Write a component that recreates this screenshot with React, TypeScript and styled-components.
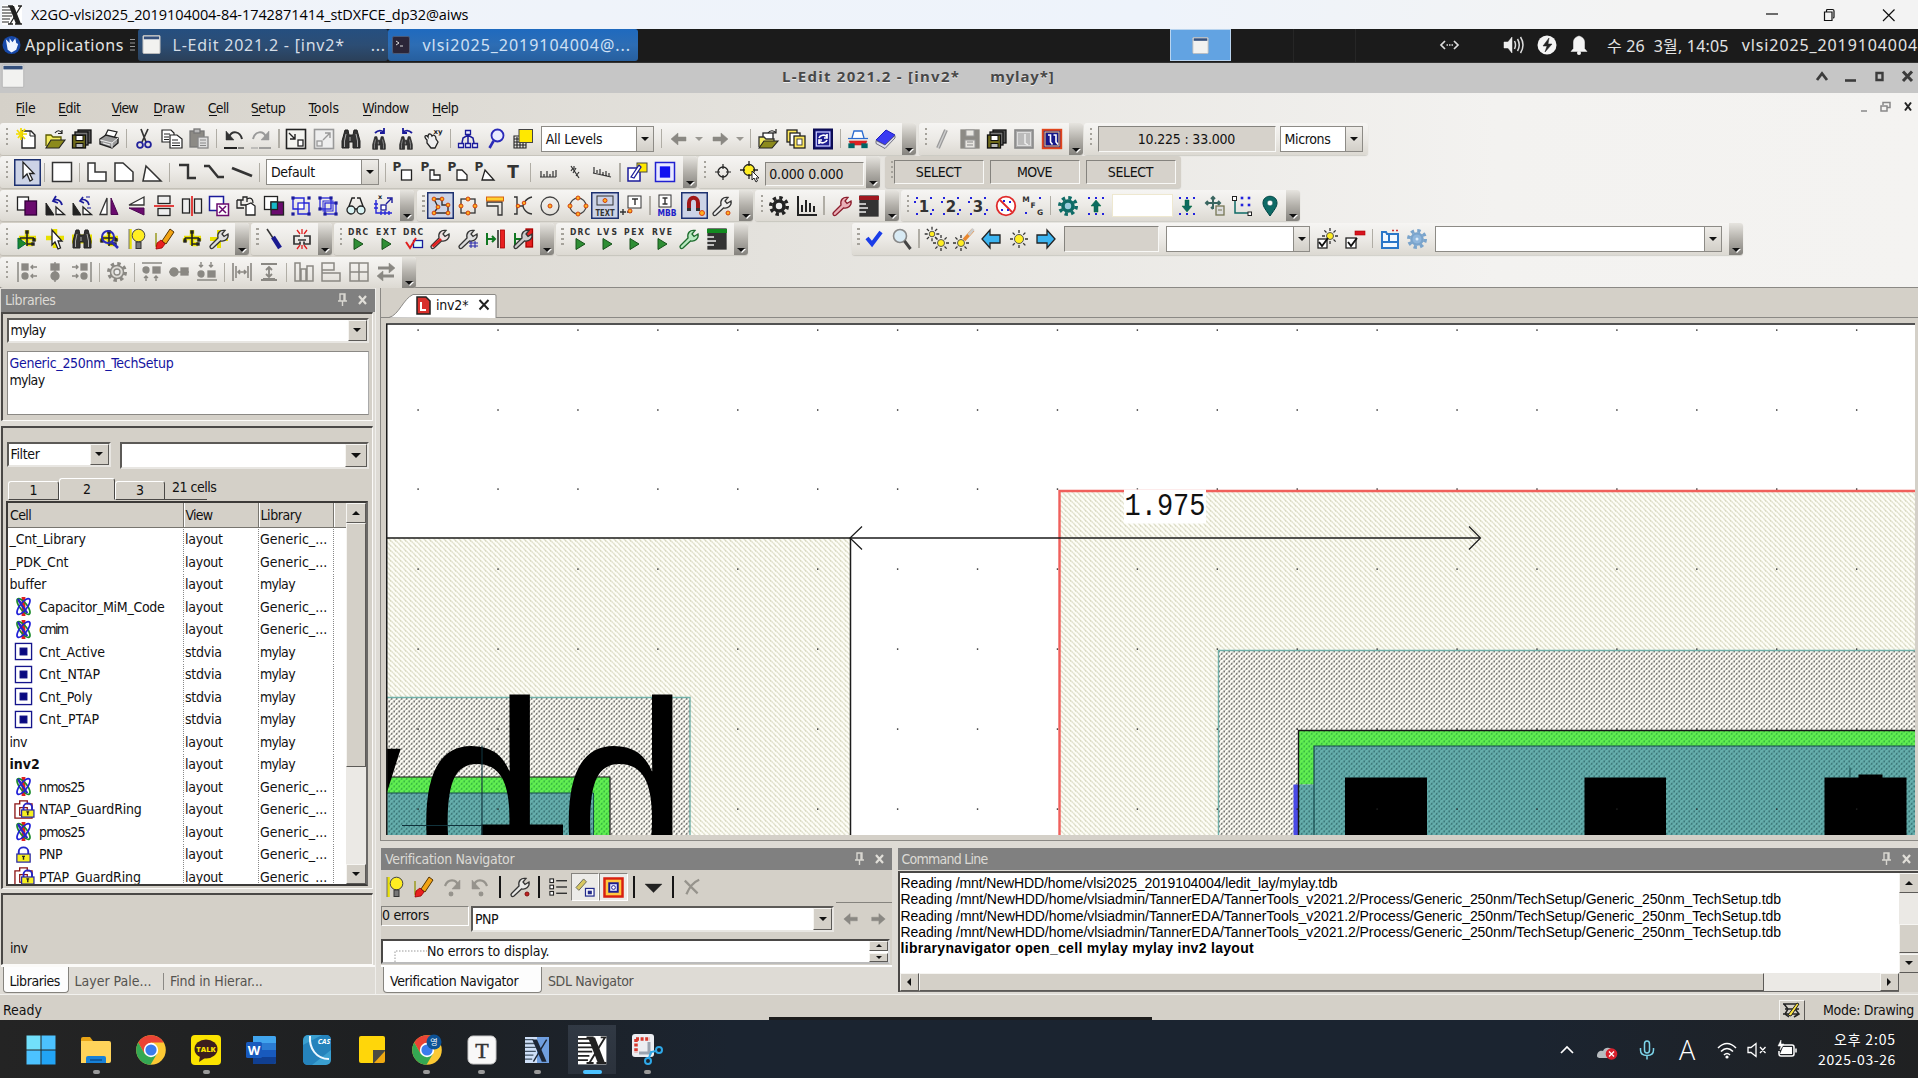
import React, { useLayoutEffect, useRef, useState } from "react";
import styled, { createGlobalStyle, css } from "styled-components";

const UI = `"DejaVu Sans Condensed", "DejaVu Sans", "Noto Sans CJK KR", sans-serif`;
const SYS = `"Open Sans", "Noto Sans CJK KR", sans-serif`;
const CONSOLE = `"Liberation Sans", Arial, sans-serif`;
const NAVY = "#1b1b9a";
const FACE = "#d4d0c8";

const Global = createGlobalStyle`
  * { box-sizing: border-box; }
  html, body { margin: 0; padding: 0; }
  body { width: 1918px; height: 1078px; overflow: hidden; font: 14px ${UI}; color: #111; background: ${FACE}; }
  svg { display: block; flex: none; }
`;

/* ---------- text that is tightened or loosened to a given width ---------- */

const FitSpan = styled.span`
  display: inline-block;
  white-space: pre;
  flex: none;
`;

function Fit({ w, children }: { w: number; children: string }) {
  const ref = useRef<HTMLSpanElement>(null);
  const [gap, setGap] = useState(0);
  useLayoutEffect(() => {
    if (ref.current) setGap((w - ref.current.offsetWidth) / children.length);
  }, []);
  return (
    <FitSpan ref={ref} style={{ letterSpacing: gap ? `${gap}px` : undefined }}>
      {children}
    </FitSpan>
  );
}

/* ---------------------------- icon drawings ---------------------------- */

const Svg = styled.svg`
  overflow: visible;
`;

const P = (d: string, s = "#222", w = 1.4, f = "none") => <path d={d} stroke={s} strokeWidth={w} fill={f} />;
const R = (x: number, y: number, w: number, h: number, f = "#fff", s = "#222", sw = 1.3) => (
  <rect x={x} y={y} width={w} height={h} fill={f} stroke={s} strokeWidth={sw} />
);
const C = (x: number, y: number, r: number, f = "none", s = "#222", sw = 1.3) => (
  <circle cx={x} cy={y} r={r} fill={f} stroke={s} strokeWidth={sw} />
);
const T = (x: number, y: number, size: number, t: string, f = "#222", w = 700) => (
  <text x={x} y={y} fontSize={size} fontWeight={w} fill={f} textAnchor="middle" fontFamily="DejaVu Sans">
    {t}
  </text>
);
const corners = (pts: number[][], f: string, s: string, r = 2) => pts.map(([x, y], i) => <g key={i}>{C(x, y, r, f, s, 1)}</g>);
const dots = (pts: number[][], f = "#2222dd", r = 1) =>
  pts.map(([x, y], i) => <rect key={i} x={x - r} y={y - r} width={2 * r} height={2 * r} fill={f} />);

const wrench = (f = "#eee", s = "#333") =>
  P("M1.500 16.500L9 9C8 4 11 .5 16 1.500L13 5l2 2.500L19 5c1 4.500-3 8-7.500 7L4 19c-2 1.500-4-.5-2.500-2.500z", s, 1.3, f);
const play = (x = 10, y = 14.5) => P(`M${x - 4} ${y - 5}v11l9-5.500z`, "#17521b", 1, "#2f8e35");
const tag = (t: string) => (
  <text x="10" y="5.500" fontSize="8.500" fontWeight="700" fill="#333" textAnchor="middle" textLength="20" fontFamily="DejaVu Sans Condensed, DejaVu Sans">
    {t}
  </text>
);
const binoc = (c = "#333") => (
  <>
    {P("M4 1h3l1 5h4l1-5h3l3 11v7h-7v-6H8v6H1v-7z", "#222", 1, c)}
    {P("M5 5L3.500 12v6M15 5l1.500 7v6M9 8v4", "#aaa", 1)}
  </>
);
const disks = (
  <>
    {R(6, 1, 13, 13, "#555", "#111")}
    {R(3, 3, 13, 13, "#777", "#111")}
    {R(0.5, 6, 13, 13, "#6f6a1c", "#111")}
    {R(4, 6.5, 7, 5, "#fff", "#111", 1)}
    {R(4, 14.5, 7, 4, "#bbb", "#111", 1)}
  </>
);
const tri = (
  <>
    {P("M1 19V7l8 12z", "#222", 1, "#222")}
    {P("M11 18.500h8.500L11 11z", "#222", 1.3, "#fff")}
  </>
);
const sun = (x: number, y: number, r: number) => (
  <>
    {P(
      [0, 45, 90, 135, 180, 225, 270, 315]
        .map((a) => {
          const c = Math.cos((a * Math.PI) / 180);
          const s = Math.sin((a * Math.PI) / 180);
          return `M${x + c * (r + 1.5)} ${y + s * (r + 1.5)}L${x + c * (r + 4.5)} ${y + s * (r + 4.5)}`;
        })
        .join(""),
      "#333",
      1.3
    )}
    {C(x, y, r, "#ffee22", "#555", 1)}
  </>
);
const gear = (f: string, hole: string, cx = 10, cy = 10, k = 1) => (
  <g transform={`translate(${cx} ${cy}) scale(${k})`}>
    <circle r="8.2" fill="none" stroke={f} strokeWidth="3.6" strokeDasharray="3.3 3.14" />
    <circle r="5" fill={hole} stroke={f} strokeWidth="3.6" />
  </g>
);
const hier = (s: string, f: string) => (
  <>
    {P("M10 1v15M2 9h17M3 9v4M17 9v3M10 15h6", "#e8e000", 4.500)}
    {P("M10 3v14M3 9h14M3 9v3M17 9v3M10 15h6", s, 1.6)}
    {dots([[10, 3], [3, 12], [17, 11], [16, 15]], s, 1.7)}
    {f && P("M1 9v11l8-5.500z", "#064", 1, f)}
  </>
);
const grid9 = dots([[3, 2], [10, 2], [17, 2], [3, 18], [10, 18], [17, 18]]);
const snapDots = dots([[3, 2], [17, 2], [3, 18], [17, 18], [1, 6], [19, 14]]);
const aluminum = "#8a8883";

const ICONS: Record<string, React.ReactNode> = {
  new: (<>{P("M5 2h9l4 4v13H5z", "#222", 1.4, "#fff")}{P("M13 2v5h5", "#222", 1)}{P("M0 1l8 9M8 0L1 9M4 -1v12M-1 5h11", "#f2dc00", 1.7)}</>),
  open: (<>{P("M1 17V6h5l2 2h8v3", "#5a5a00", 1.3, "#f4ec60")}{P("M1 19l5-8h14l-6 8z", "#222", 1.1, "#8c8a1c")}{P("M10 4c2-3 5-3 7 0M17 1v3.500h-4", "#222", 1.2)}</>),
  disks,
  print: (<>{P("M6 7l3-6 9 2-3 6", "#222", 1.2, "#fff")}{P("M1 10l6-4 12 3v5l-6 5L1 15z", "#222", 1.4, "#999")}{P("M1 11l12 3 6-5M13 14v5M4 14l7 2", "#eee", 1)}</>),
  cut: (<>{P("M7 0l5 13M14 0L8 13", "#333", 1.7)}{C(6, 16, 2.9, "none", "#22229a", 1.8)}{C(14, 15.5, 2.9, "none", "#22229a", 1.8)}</>),
  copy: (<>{P("M0 1h9l3 3v9H0z", "#222", 1.2, "#fff")}{P("M2 5h6M2 8h5M2 10.500h5", "#222", 1)}{P("M8 6h7l5 4v9H8z", "#222", 1.2, "#fff")}{P("M10 11h6M10 14h8M10 16.500h8", "#222", 1)}</>),
  paste: (<>{R(1, 2, 14, 16, "#8c8a85", "#777")}{R(5, 0, 6, 4, "#bbb", "#777")}{R(9, 8, 10, 11, "#ddd", "#888")}{P("M11 11h6M11 14h6M11 16.500h6", "#888", 1)}</>),
  undo: (<>{P("M5 8c3-7 11-6 13 2", "#333", 2)}{P("M2 2v9h8z", "#333", 0.5, "#333")}{P("M0 19h13", "#222", 2)}{P("M14 19h6", "#222", 1)}</>),
  redo: (<>{P("M15 8C12 1 4 2 2 10", "#999", 2)}{P("M18 2v9h-8z", "#999", 0.5, "#999")}{P("M8 19h12", "#888", 1.500)}{P("M0 19h7", "#999", 1)}</>),
  zoomin: (<>{R(0.500, 0.500, 19, 19, "#f4f4f0", "#222", 1.6)}{R(12, 11, 5, 6, "#fff")}{P("M3 4l6 6M9 5v5H4")}</>),
  zoomout: (<>{R(0.500, 0.500, 19, 19, "#eee", "#999", 1.6)}{R(3, 12, 5, 5, "#eee", "#999")}{P("M9 11l7-7M11 4h5v5", "#999")}</>),
  find: binoc(),
  findnext: (<><g transform="translate(3 7) scale(.7)">{binoc()}</g>{P("M6 4c3-3 6-3 9-1M15 -1v5h-4", NAVY, 1.8)}</>),
  findprev: (<><g transform="translate(3 7) scale(.7)">{binoc()}</g>{P("M16 4c-3-3-6-3-9-1M7 -1v5h4", NAVY, 1.8)}</>),
  hand: (<>{P("M4 11c-4-4-1-6 1-3 0-4 3-4 4-1 2-2 4 0 4 3l2 3-3 6H8l-4-5z", "#222", 1.3, "#eee")}{T(15, 5, 7, "xy")}</>),
  tree: (<>{P("M10 5v9M4 14l1-5 5-3 5 3 1 5", NAVY, 1.5)}{[[8, 0], [1, 13], [8, 13], [15, 13]].map(([x, y], i) => <g key={i}>{P(`M${x - 0.5} ${y + 5.500}v-4h5v4z`, NAVY, 1.3, "#eef")}</g>)}</>),
  mag: (<>{C(11.500, 6.500, 6, "#e9ecff", "#2a2ab8", 1.8)}{P("M7.500 12l-4 7", "#2a2ab8", 2.6)}</>),
  layers: (<>{P("M1 7h12v12H1zM1 10h12M1 13h12M1 16h12M4 8v11M7 8v11M10 8v11", "#222", 1.1)}{R(6, 0.500, 13.500, 13, "#ffe800", "#444", 1)}</>),
  left: P("M2 10l7-6v4h8v4H9v4z", aluminum, 0.5, aluminum),
  right: P("M18 10l-7-6v4H3v4h8v4z", aluminum, 0.5, aluminum),
  openlib: (<>{R(5, 4, 10, 7, "#fff")}{P("M1 18V8h5l2 2h8v3", "#333", 1.3, "#f4ec60")}{P("M1 19l5-7h14l-6 7z", "#222", 1.1, "#8c8a1c")}{P("M10 4c2-3 6-3 8 0M18 0v4h-3", "#222", 1.2)}</>),
  copies: (<>{R(1, 1, 10, 12, "#ffe95a")}{R(4, 4, 10, 12, "#fff")}{R(8, 7, 11, 12, "#ffe95a")}{R(11, 10, 5, 6, "#fff", "#444", 1)}</>),
  sync: (<>{R(1, 0.500, 18, 19, "#1e1e90", "#0c0c55", 2)}{R(3.300, 3, 13.500, 14, "none", "#cfd2ff", 1.200)}{P("M6 9c1-3 6-4 8-1M14 11c-1 3-6 4-8 1M14 5v4h-3M6 15v-4h3", "#fff", 1.7)}</>),
  car: (<>{P("M4 9l2-7h8l2 7", "#2a6bd0", 1.3, "#fff")}{P("M0 9.500h20", "#2a6bd0", 1.200)}{P("M1 12h18l-2 4H3z", "#c22", 0.6, "#d22")}{R(1, 15, 5, 3.500, "#066", "#066")}{R(14, 15, 5, 3.500, "#066", "#066")}</>),
  book: (<>{P("M1 11L11 1l9 5-10 10z", "#1a1ac0", 1, "#3a3af2")}{P("M1 11.500v3l9 5L20 9V6.500L10 16z", "#556", 0.8, "#dde")}</>),
  pencil: (<>{P("M14 1L6 19", "#999", 4)}{P("M14 1L6 19", "#ccc", 1.5)}</>),
  save: (<>{R(1, 1, 18, 18, "#8c8a85", "#8c8a85")}{R(6, 1, 8, 6, "#e8e6e1", "#999", 1)}{R(5, 11, 10, 8, "#e8e6e1", "#999", 1)}{P("M7 13h6M7 16h6", "#888", 1)}</>),
  chipgray: (<>{R(1, 1, 18, 18, "#aaa", "#888", 1.6)}{R(3.5, 3.5, 13, 13, "#bbb", "#ddd", 1)}{P("M11 5v9l3 2", "#eee", 1.5)}</>),
  chipblue: (<>{R(0.800, 0.800, 18.400, 18.400, "#16168a", "#e0451c", 2)}{R(3, 3, 14, 14, "#16168a", "#ffd080", 1)}{P("M6 6h2.500v7l2 2.500M11.500 6H14v7l2 2.500", "#fff", 1.6)}</>),

  select: P("M6 0v16l4-4 3 7 2.500-1.500-3-6H17z", "#222", 1.3, "#fff"),
  rect: R(0.5, 0.5, 19, 19, "#fff", "#333", 1.5),
  poly: P("M1 1h7v9h11v9H1z", "#333", 1.5, "#fff"),
  poly45: P("M1 1h8l10 9v9H1z", "#333", 1.5, "#fff"),
  polyany: P("M4 4l15 15H1z", "#333", 1.5, "#fff"),
  wire90: P("M2 3h9v13h8", "#333", 2.4),
  wire45: P("M0 4h5l9 11h6", "#333", 2.4),
  wireany: P("M0 6l20 8", "#333", 2.8),
  prect: (<>{T(4, 9, 12, "P", "#333")}{R(8.500, 8, 10, 10)}</>),
  ppoly: (<>{T(4, 9, 12, "P", "#333")}{P("M9 8h4v5h6v5H9z", "#222", 1.3, "#fff")}</>),
  ppoly45: (<>{T(4, 9, 12, "P", "#333")}{P("M9 8h5l5 5v5H9z", "#222", 1.3, "#fff")}</>),
  pany: (<>{T(4, 9, 12, "P", "#333")}{P("M10 8l9 10H7z", "#222", 1.3, "#fff")}</>),
  text: T(10, 16, 17, "T", "#333"),
  ruler: P("M2 15h16M3 15V9M6 15v-3M9 15V9M12 15v-3M15 15V9M18 15V8", "#333", 1.2),
  ruler45: P("M6 4l8 12M6 9l2-3M8 11l3-5M11 14l3-4M9 4v3", "#333", 1.2),
  rulerany: P("M1 11l18 4M2 11V5M5 11V8M8 12V7M11 13v-3M14 14V9M17 14v-3", "#333", 1.2),
  editin: (<>{R(1, 6, 12, 13, "#fff", NAVY, 1.5)}{R(10, 1, 10, 9, "#ffe800", "#444", 1)}{P("M4 15l8-12 2 2-7 11z", NAVY, 1.3, "#fff")}</>),
  via: (<>{R(0.5, 0.5, 19, 19, "#e8e8ff", "#2020d0", 1.5)}{R(5.5, 5, 9, 10, "#1010f0", "#1010f0")}</>),

  target: (<>{C(10, 10, 5)}{P("M10 2v5M10 13v5M2 10h5M13 10h5", "#222", 1.2)}</>),
  targetsel: (<>{C(9, 8, 5.500, "#ffee22")}{P("M9 -1v5M9 12v5M0 8h5M13 8h5", "#222", 1.3)}{P("M12 9v9l2-2 2 4 1.500-1-1.500-3h3z", "#222", 1, "#fff")}</>),

  dup: (<>{R(0.500, 1, 11, 13, "#fff")}{R(8, 5, 11.500, 14, "#6a0a6e", "#33003a")}</>),
  rot90: (<>{tri}{P("M8 5c3-3 8-1 9 4M11 0L8 5l5 2", NAVY, 1.8)}</>),
  rotany: (<>{tri}{P("M8 5c3-3 8-1 9 4M11 1L8 5l4 2", NAVY, 1.600)}{P("M14 1h4M15 12h4", NAVY, 1)}</>),
  fliph: (<>{P("M1 18.500L8 2v16.500z", "#333", 1.3, "#fff")}{P("M12 18.500V2l7 16.500z", "#4a0850", 1, "#6a0a6e")}</>),
  flipv: (<>{P("M2 9L17 1v8z", "#333", 1.3, "#fff")}{P("M2 12h15v7z", "#4a0850", 1, "#6a0a6e")}</>),
  sliceh: (<>{R(4, 0, 12, 7.500, "#eee")}{R(4, 12.500, 12, 7, "#eee")}{P("M0 10h20", "#e02020", 1.7)}</>),
  slicev: (<>{R(0.500, 3, 7, 14, "#eee")}{R(12.500, 3, 7, 14, "#eee")}{P("M10 0v20", "#e02020", 1.7)}</>),
  nibble: (<>{R(0.500, 0.500, 14, 14, "#fff", NAVY, 1.5)}{R(8, 8, 11.500, 11.500, "#fff", "#6a0a6e", 1.5)}{P("M10 10l7 7M17 10l-7 7", "#6a0a6e", 1.5)}</>),
  merge: (<>{P("M1 4h6V1h4v5M1 4v8h7M5 4v5h7", "#222", 1.3)}{P("M10 9l5-2 4 3v9h-9z", "#222", 1.3, "#fff")}{P("M11 3c4-2 6 0 6 4", "#222", 1.2)}</>),
  boolean: (<>{R(0.500, 0.500, 13, 13, "#fff")}{R(7, 6, 12.500, 13, "#6a0a6e")}{R(7, 6, 6.500, 7.500, "#18b8c8")}</>),
  group: (<>{P("M2 2h11v5h5v11H7v-5H2z", "#2626d8", 1.4)}{R(7, 7, 6, 6, "#fff", "#2626d8")}{dots([[2, 2], [18, 2], [2, 18], [18, 18]], NAVY, 1.6)}</>),
  ungroup: (<>{R(2, 2, 11, 11, "none", "#2626d8")}{R(7, 7, 11, 11, "none", "#2626d8")}{R(5, 5, 10, 10, "none", "#2626d8", 1)}{dots([[2, 2], [13, 2], [2, 13], [18, 18], [18, 7], [7, 18]], NAVY, 1.6)}</>),
  glasses: (<>{P("M2 13L6 2h3M18 13L14 2h-3M9 13h2", "#222", 1.4)}{C(5, 14, 4, "#d8f2f2")}{C(15, 14, 4, "#d8f2f2")}</>),
  axes: (<>{P("M3 4v13h16M1 8h4M1 12h4M8 19v-4M12 19v-4M16 19v-4", "#2626d8", 1.400)}{R(8, 9, 5, 5, "#fff", NAVY)}{P("M13 8l5-5M14 2h5v5", NAVY, 1.4)}{T(7, 3, 6.500, "x")}</>),

  snapvertex: (<>{P("M3 3h8v6h6v8H3l4-6z", "#333")}{corners([[3, 3], [11, 3], [7, 11], [17, 9], [17, 17], [3, 17]], "#ffb020", "#d04010", 1.900)}</>),
  snapmid: (<>{R(3, 3, 14, 14, "none", "#333")}{corners([[10, 3], [3, 10], [17, 10], [10, 17]], "#ffb020", "#d04010")}</>),
  snapedge: (<>{P("M2 6h15v13h-4v-9H2z", "#333", 1.3)}{P("M1 3h18", "#d86010", 5)}{P("M2 3h16", "#ffd030", 3)}</>),
  snapcross: (<>{P("M1 1h3v17H1M19 1c-8 2-9 9-9 9s1 7 9 8M4 10h6", "#333")}{corners([[5, 10], [11, 7]], "#ffb020", "#d04010", 1.8)}</>),
  snapcenter: (<>{C(10, 10, 9, "none", "#444")}{corners([[10, 10]], "#ffb020", "#d04010")}</>),
  snapquad: (<>{C(10, 10, 8, "none", "#444")}{corners([[10, 2], [10, 18], [2, 10], [18, 10]], "#ffb020", "#d04010")}</>),
  snaptext: (<>{R(2, 0, 16, 9, "none", "#333", 1)}{corners([[10, 4.5]], "#ffb020", "#d04010")}<text x="10" y="19.500" fontSize="8.500" fontWeight="700" fill="#333" textAnchor="middle" textLength="19" lengthAdjust="spacingAndGlyphs" fontFamily="DejaVu Sans">TEXT</text></>),
  snapinst: (<>{R(6, 0, 13, 12, "#fff", "#333", 1)}{P("M10 3h6M13 3v6M1 13v6M-2 16h6M5 16h5", "#333")}{corners([[8, 15]], "#ffb020", "#d04010")}</>),
  mbb: (<>{R(2, -1, 12, 12, "#fff", "#333", 1)}{P("M5.500 2h5M8 2v6M5.500 8h5", "#333")}<text x="10" y="20" fontSize="9" fontWeight="700" fill="#2222c8" textAnchor="middle" textLength="19" lengthAdjust="spacingAndGlyphs" fontFamily="DejaVu Sans">MBB</text></>),
  magnet: (<>{P("M4 13V7c0-7 9-7 9 0v6", "#a01818", 4)}{P("M2 13.500h4M11 13.500h4", "#333", 3)}{corners([[17, 17]], "#ffb020", "#e04010", 2.5)}</>),
  snapset: (<>{wrench()}{corners([[16, 17]], "#ffb020", "#d04010", 2)}</>),

  gear: gear("#222", "#eee"),
  chart: P("M1 0v19h19M5 16V9M9 16V4M13 16V7M17 16v-6", "#222", 2),
  wrenchred: wrench("#eab0b8", "#8c1c2c"),
  listred: (<>{R(1, 0, 18, 20, "#333", "#333")}{P("M0 2h20", "#a01820", 4)}{P("M0 8h7M0 12h9M0 16h7", "#eee", 1.5)}</>),
  one: (<>{snapDots}{T(10, 16, 15, "1", "#333")}</>),
  two: (<>{snapDots}{T(10, 16, 15, "2", "#333")}</>),
  three: (<>{snapDots}{T(10, 16, 15, "3", "#333")}</>),
  none: (<>{C(10, 10, 9.300, "#fff", "#e02a2a", 1.8)}{P("M4 4l12 12", "#e02a2a", 1.8)}{dots([[8, 5], [14, 6], [6, 14], [12, 14]])}</>),
  mfg: (<>{T(3, 6, 7.5, "M", "#333")}{T(10, 12, 7.5, "F", "#333")}{T(17, 19, 7.5, "G", "#333")}{dots([[17, 2], [3, 17]])}</>),
  gearteal: gear("#0e6b66", "#9cd"),
  up: (<>{grid9}{P("M10 4l5 6h-3v6H8v-6H5z", "#063", 0.5, "#0c6b60")}</>),
  down: (<>{grid9}{P("M10 16l5-6h-3V4H8v6H5z", "#063", 0.5, "#0c6b60")}</>),
  movesave: (<>{P("M8 1v12M1 7h14M6 3l2-2 2 2M3 5L1 7l2 2M13 5l2 2-2 2M6 11l2 2", "#3a6660", 2)}{R(11, 10, 8, 9, "#ddd", "#775")}{P("M13 14h4", "#775", 1)}</>),
  origin: (<>{P("M3 3v14h14", "#0e6b66", 1.5)}{R(0.5, 0.5, 4, 4, "#fff", "#222", 1)}{R(16, 16, 3.5, 3.5, "#fff", "#222", 1)}{dots([[10, 2], [17, 2], [10, 9], [17, 9]], "#2222dd", 1.3)}</>),
  pin: (<>{P("M10 20C6 14 3 11 3 7c0-9 14-9 14 0 0 4-3 7-7 13z", "#044", 1, "#0e6b66")}{C(10, 7, 2.8, "#fff", "#044", 0.5)}</>),

  hiergreen: hier("#222", "#1c8a2c"),
  hiersel: (<>{P("M10 0v19M1 9h18", "#e8e000", 4.500)}{P("M7 1v15l3-3 3 7 2.500-1-2.500-7h4z", "#222", 1.3, "#fff")}</>),
  hierfind: (<>{P("M0 10h20", "#e8e000", 9)}{binoc()}</>),
  hierzoom: (<>{hier("#222", "")}{C(9, 8, 6, "none", "#2a2ab8", 2)}{P("M13 13l6 6", "#2a2ab8", 2.5)}</>),
  bulb: (<>{P("M3.500 0v20", "#e8e000", 2.500)}{P("M2 0v20", "#555", 0.800)}{C(11.500, 6.500, 6.300, "#ffee22", "#444", 1)}{R(9, 13, 5, 6.500, "#777", "#333", 1)}</>),
  brush: (<>{P("M2 4v13h4", "#9a9a20", 1.5)}{P("M8 12l8-12 4 3-8 12z", "#553300", 1, "#f2a414")}{P("M7 11l4 4-3 4-6 1 1-6z", "#900", 0.8, "#e82020")}</>),
  hierplain: hier("#222", ""),
  hierset: (<>{P("M1 10h18M10 1v18", "#e8e000", 4)}{wrench("#ddd")}</>),
  probe: (<>{P("M3 0l6 9", "#333", 1.5)}{P("M9 8l7 11", "#1a1a90", 4.5)}</>),
  unlink: (<>{P("M8 7H2v8h6v-2.500M12 7h6v8h-6v-2.500M6 11h8", "#333", 1.7)}{P("M10 0v5M5 1l3 4M15 1l-3 4M10 20v-4M5 20l3-4M15 20l-3-4", "#e02020", 1.3)}</>),
  drcrun: (<>{tag("DRC")}{play()}</>),
  extrun: (<>{tag("EXT")}{play()}</>),
  lvsrun: (<>{tag("LVS")}{play()}</>),
  pexrun: (<>{tag("PEX")}{play()}</>),
  rverun: (<>{tag("RVE")}{play()}</>),
  drcbox: (<>{tag("DRC")}{R(10.500, 11.500, 9, 7, "#dff", NAVY)}{P("M3 13l4 6 6-10", "#e02020", 2)}</>),
  drcset: (<>{wrench("#f0e0e0", "#333")}{P("M2.500 17.500L11 10", "#e02020", 3)}</>),
  gridset: (<>{wrench("#ddd")}{P("M11 14h9M11 17h9M13 12v7M17 12v7", "#2222a8", 1)}</>),
  dist: (<>{P("M2 4v12M2 10h8M7 7l3 3-3 3", "#117722", 2)}{P("M13 1v18", "#222", 1.5)}{R(15.500, 1, 4, 18, "#e82020", "#a00", 0.800)}</>),
  distset: (<>{R(13, 0, 6.500, 18, "#e82020", "#a00")}{P("M2 4v12M2 10h7", "#117722", 2)}{wrench("#ccc")}</>),
  wrenchgreen: wrench("#b8e8c0", "#1c6b2c"),
  listgreen: (<>{R(1, 0, 18, 20, "#333", "#333")}{P("M0 2h20", "#128a20", 4)}{P("M0 8h7M0 12h9M0 16h7", "#eee", 1.5)}</>),
  check: P("M3 9l5 6 9-12", "#1a3ce8", 4),
  magclear: (<>{C(8, 7, 6.500, "#d8eaf4", "#888", 1.6)}{P("M12.500 12l6 8", "#444", 3)}</>),
  suns: (<>{sun(5, 5, 2.800)}{sun(14, 14, 3.5)}</>),
  sunbrush: (<>{sun(7, 14, 3.5)}{P("M10 11l9-10", "#e88830", 3.5)}{P("M14.500 6l5-6", "#ccc", 3)}</>),
  bleft: P("M1 10l8-9v5h10v8H9v5z", "#222", 1.3, "#3cb4f0"),
  sun: sun(10, 10, 4.500),
  bright: P("M19 10l-8-9v5H1v8h10v5z", "#222", 1.3, "#3cb4f0"),
  chksun: (<>{sun(13, 7, 3.5)}{R(1, 10, 9, 9, "#fff")}{P("M2 13l3 4 6-8", "#111", 1.9)}</>),
  chkminus: (<>{R(10, 2, 10, 4, "#d81420", "#a00", 0.6)}{R(1, 9, 10, 10, "#fff")}{P("M3 13l3 4 6-8", "#111", 1.9)}</>),
  panes: (<>{P("M2 3h4l1 2h11v14H2zM2 13h16M9 5v8", "#2a76c8", 2, "#f2f8ff")}{P("M12 1.500h2M16 1.500h2", "#c33", 1.5)}</>),
  gearblue: (<>{gear("#7aa4cc", "#a8c8e6")}{C(10, 10, 5, "#8fb6dc", "#7aa4cc", 1)}{C(10, 10, 1.500, "#dcebf8", "#dcebf8", 0)}</>),

  alleft: (<>{P("M1 0v20", aluminum, 1.5)}{R(5, 2, 6, 6, aluminum, aluminum)}{C(8, 14, 3, aluminum, aluminum)}{P("M20 5h-6M16 3l-2 2 2 2M20 14h-6M16 12l-2 2 2 2", aluminum)}</>),
  alcenter: (<>{R(6, 2, 8, 6, aluminum, aluminum)}{C(10, 14, 4, aluminum, aluminum)}{P("M10 0v20", aluminum)}</>),
  alright: (<>{P("M19 0v20", aluminum, 1.5)}{R(9, 2, 6, 6, aluminum, aluminum)}{C(12, 14, 3, aluminum, aluminum)}{P("M0 5h6M4 3l2 2-2 2M0 14h6M4 12l2 2-2 2", aluminum)}</>),
  geargray: (<>{gear(aluminum, "#ddd")}{C(10, 10, 6.500, "#dddbd6", aluminum, 1.500)}{C(10, 10, 3, "#eee", aluminum, 1.300)}</>),
  altop: (<>{P("M0 1h20", aluminum, 1.5)}{C(4, 8, 3, aluminum, aluminum)}{R(11, 5, 7, 6, aluminum, aluminum)}{P("M4 19v-5M2 16l2-2 2 2M14 19v-5M12 16l2-2 2 2", aluminum)}</>),
  almid: (<>{C(5, 10, 4, aluminum, aluminum)}{R(12, 6, 7, 7, aluminum, aluminum)}{P("M0 10h20", aluminum)}</>),
  albottom: (<>{P("M0 18h20", aluminum, 1.5)}{C(4, 12, 3, aluminum, aluminum)}{R(11, 9, 7, 6, aluminum, aluminum)}{P("M4 0v5M2 3l2 2 2-2M14 0v5M12 3l2 2 2-2", aluminum)}</>),
  sph: P("M1 1v18M4 4v12M16 4v12M19 1v18M6 10h8M8 8l-2 2 2 2M12 8l2 2-2 2", aluminum, 1.6),
  spv: P("M2 2h16M2 18h16M4 17h12M10 5v10M7 8l3-3 3 3M7 12l3 3 3-3", aluminum, 1.8),
  tiletop: P("M1 1h5v18H1zM7 7h5v12H7zM13 4h6v15h-6z", aluminum, 1.5),
  tileleft: P("M1 1h12v7H1zM1 11h18v8H1zM1 8v3", aluminum, 1.5),
  tile: P("M1 1h18v18H1zM10 1v18M1 10h18", aluminum, 1.5),
  swap: (<>{P("M2 6h12M18 14H6", aluminum, 3)}{P("M13 1l6 5-6 5zM7 9l-6 5 6 5z", aluminum, 0.5, aluminum)}</>),

  cellP: (<>{P("M10 0v20", "#e02020", 4)}<ellipse cx="10" cy="10" rx="3.800" ry="10" transform="rotate(-38 10 10)" fill="none" stroke="#1a8a2a" strokeWidth="1.800" /><ellipse cx="10" cy="10" rx="3.800" ry="10" transform="rotate(38 10 10)" fill="none" stroke="#2020d8" strokeWidth="1.800" />{P("M5 4l9 13M4 2l3 4", "#2626c8", 2.200)}</>),
  cellV: (<>{R(1.5, 1.5, 17, 17, "#fff", "#15158c", 1.4)}{R(6.5, 6.5, 7, 7, "#0a0a80", "#0a0a80")}</>),
  cellG: (<>{P("M6 4V1h8v3h5v15H1V4z", "#8c1414", 1.4, "#fff")}{R(6, 8, 8, 8, "#fff", "#8c1414", 1.3)}{P("M10 11V8c0-6 9-6 9 0v3", "#2626c8", 2)}{R(8, 10.5, 13, 7.500, "#f6f020", "#2626a8", 1.3)}{P("M14.500 12v4M13 12.500h3", "#222", 1.500)}</>),
  cellL: (<>{P("M5 10V7c0-6 10-6 10 0v3", "#2626c8", 2)}{R(3, 9.5, 14, 8.5, "#f6f020", "#2626a8", 1.3)}{P("M10 11.500v4M8.500 12h3", "#222", 1.500)}</>),
  gundo: (<>{P("M3 9c3-8 12-7 13 0", "#96938c", 2.2)}{P("M18 3v9h-8z", "#96938c", 0.5, "#96938c")}{C(9, 17, 1.8, "#96938c", "#96938c")}</>),
  gredo: (<>{P("M17 9c-3-8-12-7-13 0", "#96938c", 2.2)}{P("M2 3v9h8z", "#96938c", 0.5, "#96938c")}{C(11, 17, 1.8, "#96938c", "#96938c")}</>),
  verifset: (<>{wrench("#e8e8e6")}{C(17, 17, 2, "#c02020", "#801010", 1)}</>),
  list: (<>{[1, 8, 15].map((y) => <g key={y}>{R(1, y, 4, 4, "#fff", "#222", 1.2)}{P(`M8 ${y + 2}h12`, "#333", 1.6)}</g>)}</>),
  ruleview: (<>{P("M0 10L8 1l3 3-8 9z", "#665", 1, "#d8c860")}{R(10, 11, 9, 8, "#fff", "#222a8a", 1.3)}{R(13, 14, 3, 2.500, "#222a8a", "#222a8a")}</>),
  ruletarget: (<>{R(0.5, 0.5, 19, 19, "#ffc840", "#d82010", 2.6)}{R(5.5, 5.5, 9, 9, "#dfe4ff", "#1c1c90", 2)}{C(10, 10, 2, "#fff", "#1c1c90", 1)}</>),
  bigdown: P("M0 6h20l-10 10z", "#222", 0.5, "#222"),
  xgray: P("M1 2l16 16M19 1Q9 5 3 19", "#96938c", 2.8),
};

function Icon({ n, size = 20 }: { n: string; size?: number }) {
  return (
    <Svg width={size} height={size} viewBox="0 0 20 20">
      {ICONS[n]}
    </Svg>
  );
}

/* ----------------------------- shared parts ----------------------------- */

const Space = styled.span<{ $w: number }>`
  width: ${(p) => Math.max(p.$w, 0)}px;
  margin-left: ${(p) => Math.min(p.$w, 0)}px;
  flex: none;
`;
const Push = styled.span`
  margin-left: auto;
`;
const Gap = styled.div<{ $h: number }>`
  height: ${(p) => p.$h}px;
  flex: none;
`;
const Fill = styled.div`
  flex: 1;
`;
const Down = styled.i<{ $s?: number; $c?: string; $dir?: string }>`
  width: 0;
  height: 0;
  border: ${(p) => p.$s ?? 4}px solid transparent;
  border-top-color: ${(p) => p.$c ?? "#111"};
  border-bottom: 0;
  transform: rotate(${(p) => (p.$dir === "up" ? 180 : p.$dir === "left" ? 90 : p.$dir === "right" ? -90 : 0)}deg);
`;

/* ----------------------------- toolbar parts ---------------------------- */

const Band = styled.div<{ $ml?: number; $w?: number; $flat?: boolean }>`
  display: flex;
  align-items: center;
  flex: none;
  height: 31.5px;
  margin-left: ${(p) => p.$ml ?? 0}px;
  ${(p) => p.$w && css`width: ${p.$w}px;`}
  border-radius: 3px;
  background: ${(p) => (p.$flat ? "#d4d0c8" : "linear-gradient(#f6f5f3, #eceae6 50%, #dcd9d2)")};
  box-shadow: 0 1px 1px rgba(150, 145, 135, 0.35);
`;
const Grip = styled.span<{ $pull?: number }>`
  width: 2.5px;
  height: 20px;
  margin: 0 ${(p) => 7.5 - (p.$pull ?? 0)}px 2px 5.5px;
  flex: none;
  background: repeating-linear-gradient(#a5a29b 0 2px, transparent 2px 4.9px);
`;
const Cell = styled.span<{ $on?: boolean }>`
  width: 27.4px;
  height: 27px;
  display: flex;
  flex: none;
  align-items: center;
  justify-content: center;
  ${(p) =>
    p.$on &&
    css`
      background: #ccd3e6;
      box-shadow: inset 0 0 0 1.5px #1d3170;
    `}
`;
const SmallCell = styled.span`
  width: 13.4px;
  display: flex;
  justify-content: center;
  flex: none;
`;
const Sep = styled.span`
  width: 1.2px;
  height: 19px;
  margin: 0 3.2px;
  background: #b0ada5;
  flex: none;
`;
const More = styled.span`
  width: 14px;
  height: 31.5px;
  flex: none;
  margin-left: auto;
  display: flex;
  align-items: flex-end;
  justify-content: center;
  padding-bottom: 3px;
  border-radius: 0 3px 3px 0;
  background: linear-gradient(#e6e4df, #b3b0aa 50%, #85837e);
  &::after {
    content: "";
    border: 4px solid transparent;
    border-top: 4.5px solid #111;
    border-bottom: 0;
    filter: drop-shadow(1px 1px 0 #fff);
  }
`;
const ComboBox = styled.span<{ $w: number }>`
  display: flex;
  flex: none;
  width: ${(p) => p.$w}px;
  height: 26px;
  padding-left: 3.5px;
  align-items: center;
  background: #fff;
  border: 1.4px solid #8d8b86;
`;
const ComboArrow = styled.span`
  width: 16.5px;
  height: 100%;
  margin-left: auto;
  flex: none;
  display: flex;
  align-items: center;
  justify-content: center;
  border-left: 1px solid #8d8b86;
  background: linear-gradient(#eeece8, #d2cfc8);
`;
const Field = styled.span<{ $w: number; $ml?: number; $mt?: number; $center?: boolean; $h?: number }>`
  width: ${(p) => p.$w}px;
  height: ${(p) => p.$h ?? 26}px;
  margin: ${(p) => p.$mt ?? 0}px 0 0 ${(p) => p.$ml ?? 0}px;
  padding: 0 3px;
  flex: none;
  display: flex;
  align-items: center;
  justify-content: ${(p) => (p.$center ? "center" : "flex-start")};
  background: #d6d2cb;
  border: 1px solid;
  border-color: #85837e #f8f8f6 #f8f8f6 #85837e;
`;
const Blank = styled.span`
  width: 61px;
  height: 23px;
  flex: none;
  background: #fff;
  border: 1px solid #eee8d0;
`;

function Tools({ items, on = [] }: { items: string; on?: string[] }) {
  return (
    <>
      {items.split(" ").map((n, i) =>
        n === "|" ? (
          <Sep key={i} />
        ) : n === "v" ? (
          <SmallCell key={i}>
            <Down $c="#9a9892" />
          </SmallCell>
        ) : (
          <Cell key={i} $on={on.includes(n)}>
            <Icon n={n} />
          </Cell>
        )
      )}
    </>
  );
}

function Combo({ w, label, lw }: { w: number; label?: string; lw?: number }) {
  return (
    <ComboBox $w={w}>
      {label && <Fit w={lw!}>{label}</Fit>}
      <ComboArrow>
        <Down />
      </ComboArrow>
    </ComboBox>
  );
}

const Row = styled.div`
  display: flex;
  height: 33.4px;
  align-items: flex-start;
`;
const ToolArea = styled.section`
  height: 195px;
  flex: none;
  background: linear-gradient(90deg, #d5d1c9, #e4e2dd 40%, #f3f2f0 78%, #f4f3f1);
  border-bottom: 1.5px solid #8b8985;
`;

function Toolbars() {
  return (
    <ToolArea>
      <Menu />
      <Row>
        <Band $w={916}>
          <Grip $pull={2} />
          <Tools items="new open disks print | cut copy paste | undo redo | zoomin zoomout find findnext findprev hand | tree mag layers" />
          <Space $w={4.5} />
          <Combo w={112.5} label="All Levels" lw={56} />
          <Space $w={4} />
          <Tools items="| left v right v | openlib copies sync | car book" />
          <More />
        </Band>
        <Band $ml={3} $w={164}>
          <Grip $pull={6} />
          <Tools items="pencil save disks chipgray chipblue" />
          <More />
        </Band>
        <Band $ml={1} $w={284}>
          <Grip $pull={2} />
          <Field $w={178} $center><Fit w={97}>10.225 : 33.000</Fit></Field>
          <Space $w={4.5} />
          <Combo w={82.5} label="Microns" lw={45.5} />
        </Band>
      </Row>
      <Row>
        <Band $w={697}>
          <Grip $pull={2} />
          <Tools on={["select"]} items="select | rect | poly poly45 polyany | wire90 wire45 wireany |" />
          <Space $w={3.5} />
          <Combo w={112.5} label="Default" lw={44} />
          <Space $w={3} />
          <Tools items="| prect ppoly ppoly45 pany text | ruler ruler45 rulerany | editin via" />
          <More />
        </Band>
        <Band $ml={1} $w={182}>
          <Grip $pull={4.5} />
          <Tools items="target targetsel" />
          <Space $w={1.5} />
          <Field $w={99} $mt={4} $h={24}><Fit w={74}>0.000 0.000</Fit></Field>
          <More />
        </Band>
        <Band $ml={5} $w={296} $flat>
          <Grip $pull={7} />
          <Field $center $w={90} $h={24}><Fit w={45}>SELECT</Fit></Field>
          <Field $center $w={90} $h={24} $ml={6}><Fit w={35}>MOVE</Fit></Field>
          <Field $center $w={90} $h={24} $ml={6}><Fit w={45}>SELECT</Fit></Field>
        </Band>
      </Row>
      <Row>
        <Band $w={413.5}>
          <Grip $pull={2} />
          <Tools items="dup rot90 rotany fliph flipv sliceh slicev nibble merge boolean group ungroup glasses axes" />
          <More />
        </Band>
        <Band $ml={3} $w={336}>
          <Grip $pull={5} />
          <Tools on={["snapvertex", "snaptext", "magnet"]} items="snapvertex snapmid snapedge snapcross snapcenter snapquad snaptext snapinst | mbb magnet snapset" />
          <More />
        </Band>
        <Band $ml={2.5} $w={144}>
          <Grip $pull={5} />
          <Tools items="gear chart | wrenchred listred" />
          <More />
        </Band>
        <Band $ml={2} $w={399}>
          <Grip $pull={6.5} />
          <Tools items="one two three none mfg | gearteal up" />
          <Space $w={2.5} />
          <Blank />
          <Space $w={1} />
          <Tools items="down movesave origin pin" />
          <More />
        </Band>
      </Row>
      <Row>
        <Band $w={248.5}>
          <Grip $pull={2} />
          <Tools items="hiergreen hiersel hierfind hierzoom bulb brush hierplain hierset" />
          <More />
        </Band>
        <Band $ml={2} $w={81.5}>
          <Grip $pull={5.5} />
          <Tools items="probe unlink" />
          <More />
        </Band>
        <Band $ml={2} $w={219.5}>
          <Grip $pull={5} />
          <Tools items="drcrun extrun drcbox drcset gridset dist distset" />
          <More />
        </Band>
        <Band $ml={2} $w={192}>
          <Grip $pull={5} />
          <Tools items="drcrun lvsrun pexrun rverun wrenchgreen listgreen" />
          <More />
        </Band>
        <Band $ml={104} $w={891.5}>
          <Grip $pull={6.5} />
          <Tools items="check magclear | suns sunbrush bleft sun bright" />
          <Space $w={4} />
          <Field $w={95} />
          <Space $w={7.5} />
          <Combo w={144} />
          <Space $w={3.5} />
          <Tools items="chksun chkminus | panes gearblue" />
          <Space $w={4} />
          <Combo w={287} />
          <More />
        </Band>
      </Row>
      <Row>
        <Band $w={415.5}>
          <Grip $pull={2} />
          <Tools items="alleft alcenter alright | geargray | altop almid albottom | sph spv | tiletop tileleft tile swap" />
          <More />
        </Band>
      </Row>
    </ToolArea>
  );
}

/* ------------------------------ menu bar ------------------------------ */

const MenuBar = styled.nav`
  display: flex;
  height: 30px;
  align-items: center;
  padding-right: 4px;
`;
const MenuItem = styled.span<{ $ml: number }>`
  margin-left: ${(p) => p.$ml}px;
  flex: none;
`;
const Mnemonic = styled.span`
  position: relative;
  display: inline-flex;
  &::after {
    content: "";
    position: absolute;
    left: 1px;
    width: 8px;
    bottom: 0;
    height: 1px;
    background: #111;
  }
`;

const MENUS: [string, number, number][] = [
  ["File", 15.5, 20], ["Edit", 22.5, 22], ["View", 31, 26.5], ["Draw", 15.5, 31.5], ["Cell", 23, 21.5],
  ["Setup", 22, 35], ["Tools", 23, 31], ["Window", 23, 47], ["Help", 23, 26.5],
];

function Menu() {
  return (
    <MenuBar>
      {MENUS.map(([t, ml, w]) => (
        <MenuItem key={t} $ml={ml}>
          <Mnemonic><Fit w={w}>{t}</Fit></Mnemonic>
        </MenuItem>
      ))}
      <Push />
      <svg width="56" height="16" viewBox="0 0 56 16">
        {P("M3 11h6", "#888", 1.5)}
        {P("M23 6h6v5h-6zM25 5V2.500h7v5h-3", "#888", 1.5)}
        {P("M47 2.500l6 8M53 2.500l-6 8", "#222", 2)}
      </svg>
    </MenuBar>
  );
}

/* --------------------------- window title bars --------------------------- */

const WinTitle = styled.header`
  height: 29px;
  flex: none;
  display: flex;
  align-items: center;
  gap: 9px;
  padding-left: 2px;
  font: 14.5px ${SYS};
  color: #000;
  background: linear-gradient(90deg, #f0f3f9, #eef3fb 60%, #f3f3f3 85%);
`;
const XPanel = styled.div`
  height: 33.5px;
  flex: none;
  display: flex;
  align-items: center;
  background: #1b1b1b;
  color: #e4e4e4;
  font: 16px "Noto Sans", "Noto Sans CJK KR", sans-serif;
  border-bottom: 1px solid #333;
`;
const AppsButton = styled.div`
  width: 137.5px;
  height: 100%;
  display: flex;
  align-items: center;
  padding-left: 2px;
  gap: 4px;
  flex: none;
`;
const Task = styled.div<{ $w: number; $active?: boolean }>`
  width: ${(p) => p.$w}px;
  height: 32px;
  flex: none;
  display: flex;
  align-items: center;
  padding: 0 0 1px 4px;
  border-radius: 3px;
  color: ${(p) => (p.$active ? "#cfe0f4" : "#d5dde6")};
  background: ${(p) => (p.$active ? "linear-gradient(#1f6abf, #2d6db4 50%, #275f9e)" : "linear-gradient(#254f80, #2c4d74 50%, #2b4059)")};
`;
const Pager = styled.div`
  width: 61.5px;
  height: 32px;
  margin-left: 531.5px;
  flex: none;
  display: flex;
  align-items: center;
  justify-content: center;
  background: #62a3e2;
  border: 1.5px solid #b9d4ef;
`;
const PagerCell = styled.div`
  width: 62.5px;
  height: 100%;
  border-right: 1px solid #262626;
  flex: none;
`;
const LeTitle = styled.div`
  height: 30.5px;
  flex: none;
  display: flex;
  align-items: center;
  background: #c6c6c6;
  padding: 0 0 4px 1px;
  font: bold 15px "Noto Sans", sans-serif;
  color: #484848;
  text-shadow: 0 1px 0 #eee;
`;

const xlogo = (bg: string) => (
  <>
    <rect width="20" height="20" fill={bg} />
    <path d="M0 2h9M0 5h10M0 8h11M0 11h10M0 14h8M0 17h7" stroke="#222" strokeWidth="1.2" />
    <path d="M7 1h5l7 18h-5z" fill="#222" />
    <path d="M19 1L8 19M16 1h4M6 19h5M6 1h5M13 19h7" stroke="#222" strokeWidth="1.3" />
  </>
);
const windowIcon = (s: number) => (
  <svg width={s} height={s} viewBox="0 0 20 20">
    <rect x="1" y="0.5" width="18" height="19" rx="1" fill="#f2f2f0" stroke="#bbb" />
    <rect x="2" y="1.5" width="16" height="3" fill="#35507c" />
  </svg>
);

function Header() {
  return (
    <>
      <WinTitle>
        <svg width="20" height="20" viewBox="0 0 20 20">{xlogo("#fff")}</svg>
        <Fit w={437}>X2GO-vlsi2025_2019104004-84-1742871414_stDXFCE_dp32@aiws</Fit>
        <Push />
        <svg width="153" height="16" viewBox="0 0 153 16">
          {P("M1 7h12", "#111", 1.2)}
          {P("M59.500 5h7.500v8.500h-7.500zM61.500 4.500V3.500q0-1 1-1h5q1.500 0 1.500 1.500v6q0 1-1 1", "#111", 1.2)}
          {P("M118 2.500l11.500 11.500M129.500 2.500L118 14", "#111", 1.2)}
        </svg>
      </WinTitle>
      <XPanel>
        <AppsButton>
          <svg width="19" height="20" viewBox="0 0 20 20">
            <circle cx="10" cy="10" r="9.5" fill="#1648a8" />
            <path d="M4 4l4 4V3l3 4 3-4 1 5 2 1-2 6-5 3-4-3z" fill="#eef4ff" />
          </svg>
          <Fit w={99}>Applications</Fit>
          <svg width="8" height="14" viewBox="0 0 8 14">{P("M2 1.500h5M2 5h5M2 8.500h5M2 12h5", "#999", 1)}</svg>
        </AppsButton>
        <Task $w={250}>
          {windowIcon(19)}
          <Space $w={12} />
          <Fit w={172}>L-Edit 2021.2 - [inv2*</Fit>
          <Space $w={26} />
          <Fit w={15}>...</Fit>
        </Task>
        <Task $w={250.5} $active>
          <svg width="18" height="18" viewBox="0 0 18 18">
            <rect x="0.5" y="0.5" width="17" height="17" rx="1.5" fill="#2b2538" stroke="#4a5a78" />
            {P("M4 5l3 2-3 2M8 10h3", "#ddd", 1)}
          </svg>
          <Space $w={13} />
          <Fit w={209}>vlsi2025_2019104004@...</Fit>
        </Task>
        <Pager>{windowIcon(17)}</Pager>
        <PagerCell />
        <PagerCell />
        <Push />
        <svg width="156" height="24" viewBox="0 0 156 24">
          {P("M6 8l-4 4 4 4M15 8l4 4-4 4M7.500 12h1.500M10 12h1.500M12.500 12H14", "#ddd", 1.7)}
          {P("M65 9h4l4-5v16l-4-5h-4z", "#eee", 0.5, "#eee")}
          {P("M75.500 8q2 4 0 8M78.500 6q3.500 6 0 12M81.500 4q5 8 0 16", "#ddd", 1.5)}
          {C(108, 12, 9.5, "#f4f4f4", "#f4f4f4", 0)}
          {P("M110 5l-6 8h4l-2 6 7-8h-4z", "#222", 0.5, "#222")}
          {P("M132 18.500h16l-2.500-3V9c0-3-2-5-5.500-6-3.500 1-5.500 3-5.500 6v6.500z", "#f4f4f4", 0.5, "#f4f4f4")}
          {C(140, 20, 2, "#f4f4f4", "#f4f4f4", 0)}
        </svg>
        <Space $w={12} />
        <Fit w={122}>수 26  3월, 14:05</Fit>
        <Space $w={13} />
        <Fit w={176}>vlsi2025_2019104004</Fit>
      </XPanel>
      <LeTitle>
        {windowIcon(24)}
        <Space $w={757} />
        <Fit w={178}>L-Edit 2021.2 - [inv2*</Fit>
        <Space $w={30} />
        <Fit w={64}>mylay*]</Fit>
        <Push />
        <svg width="106" height="16" viewBox="0 0 106 16">
          {P("M5 12l5-6.500 5 6.500", "#3c3c3c", 2.8)}
          {P("M33 12.500h11", "#3c3c3c", 2.6)}
          {P("M64.500 5h6v7h-6z", "#3c3c3c", 2.4)}
          {P("M91 3.500l9 9.500M100 3.500L91 13", "#3c3c3c", 3)}
        </svg>
      </LeTitle>
    </>
  );
}

/* ------------------------------ left panel ------------------------------ */

const Main = styled.main`
  height: 706px;
  flex: none;
  display: flex;
  background: #dedbd5;
`;
const Left = styled.aside`
  width: 376px;
  flex: none;
  display: flex;
  flex-direction: column;
  padding: 1px 0 0 1px;
  border-right: 1px solid #efeeeb;
`;
const PanelTitle = styled.div`
  height: 22.5px;
  flex: none;
  display: flex;
  align-items: center;
  padding: 0 5px 0 4px;
  background: #808080;
  color: #dcdad5;
`;
function PanelHead({ t, w }: { t: string; w: number }) {
  return (
    <PanelTitle>
      <Fit w={w}>{t}</Fit>
      <Push />
      <svg width="34" height="16" viewBox="0 0 34 16">
        {P("M4 2h5v7H4zM2 9h9M6.500 9v5M8 2v7", "#d8d6d0", 1.4)}
        {P("M23 4l7 8M30 4l-7 8", "#e0ded8", 2.2)}
      </svg>
    </PanelTitle>
  );
}
const Pane = styled.div<{ $h: number }>`
  height: ${(p) => p.$h}px;
  flex: none;
  margin-right: 2px;
  display: flex;
  flex-direction: column;
  background: ${FACE};
  border: 2px solid;
  border-color: #4a4846 #fbfaf8 #fbfaf8 #4a4846;
  border-bottom-width: 1px;
  border-right-width: 1px;
`;
const Sunk = styled.div<{ $w: number; $h: number }>`
  width: ${(p) => p.$w}px;
  height: ${(p) => p.$h}px;
  flex: none;
  display: flex;
  align-items: center;
  background: #fff;
  padding-left: 2px;
  border: 2px solid;
  border-color: #5c5a57 #e8e6e2 #e8e6e2 #5c5a57;
`;
const Raised = styled.span<{ $w: number; $h?: number }>`
  width: ${(p) => p.$w}px;
  height: ${(p) => (p.$h ? `${p.$h}px` : "100%")};
  flex: none;
  display: flex;
  align-items: center;
  justify-content: center;
  background: ${FACE};
  border: 1.5px solid;
  border-color: #f6f5f2 #5c5a57 #5c5a57 #f6f5f2;
`;
const LibList = styled.div`
  width: 362px;
  height: 64px;
  margin: 8px 0 0 3.5px;
  background: #fff;
  border: 1.5px solid #8b8985;
  border-right-color: #aaa;
  padding: 2.5px 2px;
  line-height: 17.5px;
  display: flex;
  flex-direction: column;
  align-items: flex-start;
`;
const LibLink = styled.span`
  color: #1414a0;
  height: 17.5px;
`;
const Line = styled.div<{ $pt: number; $pl: number; $gap?: number }>`
  display: flex;
  padding: ${(p) => p.$pt}px 0 0 ${(p) => p.$pl}px;
  gap: ${(p) => p.$gap ?? 0}px;
  flex: none;
`;
const TabStrip = styled.div`
  display: flex;
  align-items: flex-end;
  height: 23px;
  margin: 8px 0 0 5px;
  flex: none;
`;
const NumTab = styled.span<{ $on?: boolean; $w: number }>`
  width: ${(p) => p.$w}px;
  height: ${(p) => (p.$on ? 22 : 19)}px;
  display: flex;
  align-items: center;
  justify-content: center;
  border: 1px solid;
  border-color: #fff #4a4846 ${(p) => (p.$on ? FACE : "#4a4846")} #fff;
  border-radius: 3px 3px 0 0;
  background: ${FACE};
`;
const TabTail = styled.span`
  width: 42px;
  border-bottom: 1.5px solid #4a4846;
  height: 23px;
  padding: 2px 0 0 7px;
  white-space: nowrap;
`;
const Table = styled.div`
  width: 362px;
  height: 385px;
  margin: 1px 0 0 3px;
  flex: none;
  display: flex;
  overflow: hidden;
  background: #fff;
  border: 2px solid #3c3a38;
  border-right-color: #6a6866;
`;
const TBody = styled.div`
  flex: 1;
  overflow: hidden;
`;
const COLS = "175.5px 75px 75px 1fr";
const THead = styled.div`
  display: grid;
  grid-template-columns: ${COLS};
  height: 25.5px;
  background: ${FACE};
  border-bottom: 1px solid #77756f;
  align-items: center;
  & > span {
    padding-left: 2px;
    height: 24.5px;
    line-height: 25px;
    border-right: 1px solid #77756f;
    box-shadow: 1px 0 0 #fff;
  }
  & > span:last-child { border: 0; box-shadow: none; }
`;
const TRow = styled.div<{ $bold?: boolean }>`
  display: grid;
  grid-template-columns: ${COLS};
  height: 22.52px;
  align-items: center;
  & > span {
    display: flex;
    align-items: center;
    height: 21px;
    padding-left: 1.5px;
    border-right: 1px dotted #888;
  }
  & > span:first-child { font-weight: ${(p) => (p.$bold ? 700 : 400)}; }
  & > span:last-child { border: 0; }
`;
const IconSlot = styled.span`
  width: 25px;
  margin-left: 4.5px;
`;
const VScroll = styled.div<{ $w: number }>`
  width: ${(p) => p.$w}px;
  flex: none;
  display: flex;
  flex-direction: column;
  background: #ebe9e5;
`;
const Note = styled.div`
  margin: auto 0 8px 7px;
`;
const WhiteBar = styled.div`
  height: 2.5px;
  flex: none;
  background: #fbfaf8;
`;
const BottomTabs = styled.div`
  height: 28px;
  flex: none;
  display: flex;
  align-items: flex-start;
  color: #55534f;
`;
const BTab = styled.span<{ $w: number }>`
  width: ${(p) => p.$w}px;
  height: 25.5px;
  display: flex;
  align-items: center;
  padding: 3px 0 0 6px;
  background: #fdfdfd;
  color: #111;
  border: 1px solid #85837e;
  border-top: 0;
  border-radius: 0 0 4px 4px;
  flex: none;
`;
const BText = styled.span<{ $ml: number; $bar?: boolean }>`
  margin-left: ${(p) => p.$ml}px;
  height: 17px;
  line-height: 17px;
  margin-top: 6px;
  ${(p) => p.$bar && css`border-left: 1px solid #8b8985; padding-left: 6px;`}
`;

const CELLS: [string, string, number, string, string][] = [
  ["", "_Cnt_Library", 76, "layout", "Generic_..."], ["", "_PDK_Cnt", 59, "layout", "Generic_..."],
  ["", "buffer", 37, "layout", "mylay"], ["cellP", "Capacitor_MiM_Code", 126, "layout", "Generic_..."],
  ["cellP", "cmim", 28.5, "layout", "Generic_..."], ["cellV", "Cnt_Active", 66, "stdvia", "mylay"],
  ["cellV", "Cnt_NTAP", 61, "stdvia", "mylay"], ["cellV", "Cnt_Poly", 53.5, "stdvia", "mylay"],
  ["cellV", "Cnt_PTAP", 60, "stdvia", "mylay"], ["", "inv", 17.5, "layout", "mylay"],
  ["", "inv2", 30, "layout", "mylay"], ["cellP", "nmos25", 46, "layout", "Generic_..."],
  ["cellG", "NTAP_GuardRing", 102.5, "layout", "Generic_..."], ["cellP", "pmos25", 46, "layout", "Generic_..."],
  ["cellL", "PNP", 23.5, "layout", "Generic_..."], ["cellG", "PTAP_GuardRing", 101.5, "layout", "Generic_..."],
];

function LeftPanel() {
  return (
    <Left>
      <PanelHead t="Libraries" w={50} />
      <Pane $h={109}>
        <Line $pt={4} $pl={3.5}>
          <Sunk $w={362} $h={25.5}><Fit w={34.5}>mylay</Fit><Push /><Raised $w={19}><Down $s={4.5} /></Raised></Sunk>
        </Line>
        <LibList>
          <LibLink><Fit w={163.5}>Generic_250nm_TechSetup</Fit></LibLink>
          <Fit w={34.5}>mylay</Fit>
        </LibList>
      </Pane>
      <Gap $h={5} />
      <Pane $h={463}>
        <Line $pt={14} $pl={3.5} $gap={9.5}>
          <Sunk $w={104} $h={25.5}><Fit w={29}>Filter</Fit><Push /><Raised $w={19}><Down $s={4.5} /></Raised></Sunk>
          <Sunk $w={249} $h={27}><Push /><Raised $w={22}><Down $s={5.5} /></Raised></Sunk>
        </Line>
        <TabStrip>
          <NumTab $w={51}>1</NumTab>
          <NumTab $w={56} $on>2</NumTab>
          <NumTab $w={50}>3</NumTab>
          <TabTail><Fit w={44}>21 cells</Fit></TabTail>
        </TabStrip>
        <Table>
          <TBody>
            <THead>
              <span><Fit w={21.5}>Cell</Fit></span><span><Fit w={27}>View</Fit></span><span><Fit w={41}>Library</Fit></span><span />
            </THead>
            {CELLS.map(([ic, name, w, view, lib]) => (
              <TRow key={name} $bold={name === "inv2"}>
                <span>{ic && <IconSlot><Icon n={ic} size={19} /></IconSlot>}<Fit w={w}>{name}</Fit></span>
                <span><Fit w={view === "layout" ? 37.5 : 36.5}>{view}</Fit></span>
                <span><Fit w={lib === "mylay" ? 34.5 : 67}>{lib}</Fit></span>
                <span />
              </TRow>
            ))}
          </TBody>
          <VScroll $w={20}>
            <Raised $w={20} $h={20}><Down $dir="up" $s={4.5} /></Raised>
            <Raised $w={20} $h={244} />
            <Fill />
            <Raised $w={20} $h={20}><Down $s={4.5} /></Raised>
          </VScroll>
        </Table>
      </Pane>
      <Gap $h={4} />
      <Pane $h={72}><Note><Fit w={17.5}>inv</Fit></Note></Pane>
      <WhiteBar />
      <BottomTabs>
        <Space $w={1.5} />
        <BTab $w={66}><Fit w={50}>Libraries</Fit></BTab>
        <BText $ml={6}><Fit w={77}>Layer Pale...</Fit></BText>
        <BText $ml={11.5} $bar><Fit w={93}>Find in Hierar...</Fit></BText>
      </BottomTabs>
    </Left>
  );
}

/* ------------------------------ layout canvas ------------------------------ */

const Right = styled.section`
  width: 1538px;
  margin-left: 4px;
  flex: none;
  display: flex;
  flex-direction: column;
`;
const DocStrip = styled.div`
  height: 29.5px;
  flex: none;
  display: flex;
  align-items: flex-end;
  padding-left: 8px;
  background: #d4d0c8;
  border-left: 1px solid #8b8985;
  border-bottom: 1px solid #8b8985;
`;
const DocTab = styled.div`
  position: relative;
  width: 108px;
  height: 24px;
  display: flex;
  align-items: center;
`;
const DocShape = styled.svg`
  position: absolute;
  left: 0;
  top: 0;
`;
const DocLabel = styled.div`
  position: relative;
  display: flex;
  align-items: center;
  padding: 1px 0 0 27px;
  gap: 5px;
`;
const CanvasFrame = styled.div`
  height: 523px;
  flex: none;
  padding: 5px 3px 3.5px 5px;
  background: ${FACE};
  border-left: 1px solid #8b8985;
  border-bottom: 1px solid #8b8985;
`;
const Sheet = styled.svg`
  background: #fff;
`;

const GX = Array.from({ length: 19 }, (_, i) => 418 + i * 79.92);
const GY = [329.5, 409.4, 488.5, 568.5, 648.5, 728.5, 808.5];

const hatch = (id: string, bg: string, strong: string, weak: string) => (
  <pattern id={id} width="5" height="5" patternUnits="userSpaceOnUse">
    <rect width="5" height="5" fill={bg} />
    <path d="M3.400 .2H5v1.200H3.400zM.9 2.700h1.500v1.200H.9z" fill={strong} />
    <path d="M2.200 1.500h1.300v1.100H2.200zM0 3.900h1v1.100H0z" fill={weak} />
  </pattern>
);

function Canvas() {
  return (
    <CanvasFrame>
      <Sheet width="1529" height="512" viewBox="386 322.5 1529 512">
        <defs>
          <pattern id="well" width="5" height="5" patternUnits="userSpaceOnUse">
            <rect width="5" height="5" fill="#fefef8" />
            <path d="M0 0h1.600v1.100H0zM1.600 1.200h1.400v1.100H1.600zM3 2.500h1.400v1.100H3zM4.100 3.700H5v1.100h-.9zM0 3.700h.5v1.100H0z" fill="#c8c8a8" />
          </pattern>
          {hatch("select", "#fdfcf5", "#2a2a2a", "#a4a49a")}
          {hatch("active", "#62f050", "#1f9a34", "#48cf58")}
          {hatch("metal", "#66afad", "#24595c", "#4a9090")}
        </defs>
        <rect x="386" y="537" width="464" height="300" fill="url(#well)" />
        <rect x="1059" y="490" width="860" height="350" fill="url(#well)" />
        <rect x="386" y="697" width="304" height="140" fill="url(#select)" />
        <rect x="1218.5" y="650" width="700" height="190" fill="url(#select)" />
        <path d="M386 697h304v140M1218.500 840V650h700" fill="none" stroke="#6fb0a8" strokeWidth="1.4" />
        <rect x="386" y="776.5" width="224" height="60" fill="url(#active)" />
        <rect x="386" y="792.5" width="207.5" height="44" fill="url(#metal)" />
        <path d="M386 776.500h224v60" fill="none" stroke="#161616" strokeWidth="1.2" />
        <path d="M386 792.500h207.500v44" fill="none" stroke="#174a4c" strokeWidth="1" />
        <rect x="1298.5" y="730" width="620" height="54" fill="url(#active)" />
        <rect x="1298.5" y="784" width="20" height="54" fill="url(#metal)" />
        <rect x="1314" y="745.5" width="604" height="92" fill="url(#metal)" />
        <rect x="1293.5" y="784" width="5.5" height="54" fill="#4a4ae6" />
        <path d="M1298.500 838V730h620" fill="none" stroke="#161616" strokeWidth="1.4" />
        <path d="M1314 838v-92.500h604" fill="none" stroke="#174a4c" strokeWidth="1.2" />
        <path d="M1345 777h82v60h-82zM1584.500 777h81.500v60h-81.500zM1824.500 777h82v60h-82zM1858.500 774h24v4h-24z" fill="#000" />
        <path d="M1850 767v10" stroke="#174a4c" strokeWidth="1" />
        {GY.map((y) =>
          GX.map((x) => <rect key={`${x}-${y}`} x={x - 0.6} y={y - 0.6} width="1.4" height="1.4" fill="#222" />)
        )}
        <path d="M386 537.500h464.500V836" fill="none" stroke="#1c1c1c" strokeWidth="1.5" />
        <path d="M1059.500 836V490.500h860" fill="none" stroke="#f0605c" strokeWidth="2.4" />
        <g transform="translate(0 894) scale(1 1.19)" fontFamily="Liberation Sans, Arial, sans-serif" fontSize="232" fill="#000">
          <text x="285.5" y="0">v</text>
          <text x="416.5" y="0">d</text>
          <text x="559" y="0">d</text>
        </g>
        <path d="M481.500 824h81.500v12h-81.500z" fill="#000" />
        <path d="M482 745v90M402 825h80" stroke="#12333c" strokeWidth="1.1" />
        <path d="M850 537.500h630" stroke="#1a1a1a" strokeWidth="1.5" />
        <path d="M862 526l-12 11.500 12 11.500M1469 526l11.500 11.500-11.500 11.500" fill="none" stroke="#1a1a1a" strokeWidth="1.2" />
        <rect x="1124" y="489" width="82" height="34" fill="#fff" />
        <text x="1124.5" y="514" textLength="81" lengthAdjust="spacingAndGlyphs" fontFamily="Liberation Mono, monospace" fontSize="32" fill="#111">
          1.975
        </text>
        <path d="M386.700 835V323.500h1530" fill="none" stroke="#1a1a1a" strokeWidth="1.6" />
      </Sheet>
    </CanvasFrame>
  );
}

/* ------------------------------ bottom panels ------------------------------ */

const Docks = styled.div`
  flex: 1;
  display: flex;
  padding-top: 7px;
`;
const Verif = styled.div`
  width: 511.5px;
  padding-left: 1px;
  flex: none;
  display: flex;
  flex-direction: column;
`;
const VBody = styled.div`
  height: 97px;
  background: ${FACE};
  border-bottom: 2px solid #fff;
  display: flex;
  flex-direction: column;
  flex: none;
`;
const VTools = styled.div`
  height: 34px;
  flex: none;
  display: flex;
  align-items: center;
`;
const VCell = styled.span<{ $w?: number; $on?: boolean }>`
  width: ${(p) => p.$w ?? 28.3}px;
  height: 28px;
  display: flex;
  flex: none;
  align-items: center;
  justify-content: center;
  ${(p) =>
    p.$on &&
    css`
      background: #ecebe8;
      border: 1px solid;
      border-color: #85837e #fff #fff #85837e;
    `}
`;
const VSep = styled.span`
  width: 2px;
  height: 22px;
  margin: 0 5px;
  background: #151515;
  flex: none;
`;
const VRow = styled.div`
  display: flex;
  align-items: flex-start;
  height: 33px;
  margin-top: 2px;
  flex: none;
`;
const ErrCount = styled.span`
  width: 88px;
  height: 20px;
  line-height: 17px;
  border: 1px solid;
  border-color: #85837e #fff #fff #85837e;
  flex: none;
`;
const NavArrows = styled.span`
  display: flex;
  gap: 9px;
  padding: 7px 0 0 6px;
  height: 30px;
  width: 56px;
  margin: -4px 0 0 2px;
  border-top: 1px solid #85837e;
`;
const Tree = styled.div`
  width: 509px;
  height: 25px;
  display: flex;
  align-items: center;
  flex: none;
  background: #fff;
  border: 2px solid;
  border-color: #4a4846 #ddd #bbb #4a4846;
`;
const TreeText = styled.span`
  margin-bottom: 2px;
  flex: none;
`;
const Spin = styled.span`
  display: flex;
  flex-direction: column;
  justify-content: space-between;
  height: 21px;
  margin-left: auto;
`;
const Cmd = styled.div`
  width: 1021px;
  margin-left: 6px;
  flex: none;
  display: flex;
  flex-direction: column;
`;
const CmdBody = styled.div`
  height: 121px;
  margin-top: 1px;
  flex: none;
  display: flex;
  background: #fff;
  border-left: 2px solid #4a4846;
  border-top: 2px solid #4a4846;
`;
const CmdMain = styled.div`
  flex: 1;
  display: flex;
  flex-direction: column;
`;
const CmdText = styled.div`
  height: 100px;
  padding: 2px 0 0 1px;
  font: 14px/16.3px ${CONSOLE};
  display: flex;
  flex-direction: column;
  color: #000;
`;
const CmdLine = styled.span<{ $bold?: boolean }>`
  height: 16.3px;
  font-weight: ${(p) => (p.$bold ? 700 : 400)};
`;
const HScroll = styled.div`
  height: 19px;
  display: flex;
  background: #ebe9e5;
  border-bottom: 1px solid #6a6866;
`;
const Corner = styled.div`
  height: 19px;
  background: ${FACE};
`;

const LONG = "Reading /mnt/NewHDD/home/vlsiadmin/TannerEDA/TannerTools_v2021.2/Process/Generic_250nm/TechSetup/Generic_250nm_TechSetup.tdb";

function Bottom() {
  return (
    <Docks>
      <Verif>
        <PanelHead t="Verification Navigator" w={129} />
        <VBody>
          <VTools>
            {["bulb", "brush", "gundo", "gredo"].map((n) => (
              <VCell key={n}><Icon n={n} /></VCell>
            ))}
            <VSep />
            <VCell $w={27}><Icon n="verifset" /></VCell><VSep />
            <VCell $w={26}><Icon n="list" size={18} /></VCell>
            <VCell $on><Icon n="ruleview" size={19} /></VCell>
            <VCell $on><Icon n="ruletarget" size={19} /></VCell>
            <VSep /><VCell $w={27}><Icon n="bigdown" size={17} /></VCell><VSep />
            <VCell $w={27}><Icon n="xgray" size={16} /></VCell>
          </VTools>
          <VRow>
            <ErrCount><Fit w={47}>0 errors</Fit></ErrCount>
            <Space $w={2} />
            <Sunk $w={363} $h={25.5}><Fit w={23.5}>PNP</Fit><Push /><Raised $w={19}><Down $s={4.5} /></Raised></Sunk>
            <NavArrows><Icon n="left" size={18} /><Icon n="right" size={18} /></NavArrows>
          </VRow>
          <Tree>
            <svg width="44" height="21" viewBox="0 0 44 21">
              <path d="M12 21V10h32" fill="none" stroke="#999" strokeDasharray="1.5 1.5" />
            </svg>
            <TreeText><Fit w={122}>No errors to display.</Fit></TreeText>
            <Spin>
              <Raised $w={19} $h={9.5}><Down $dir="up" $s={3.5} /></Raised>
              <Raised $w={19} $h={9.5}><Down $s={3.5} /></Raised>
            </Spin>
          </Tree>
        </VBody>
        <BottomTabs>
          <Space $w={2} />
          <BTab $w={159}><Fit w={128}>Verification Navigator</Fit></BTab>
          <BText $ml={6}><Fit w={85}>SDL Navigator</Fit></BText>
        </BottomTabs>
      </Verif>
      <Cmd>
        <PanelHead t="Command Line" w={86} />
        <CmdBody>
          <CmdMain>
            <CmdText>
              <CmdLine><Fit w={436.5}>Reading /mnt/NewHDD/home/vlsi2025_2019104004/ledit_lay/mylay.tdb</Fit></CmdLine>
              <CmdLine><Fit w={880.5}>{LONG}</Fit></CmdLine>
              <CmdLine><Fit w={880.5}>{LONG}</Fit></CmdLine>
              <CmdLine><Fit w={880.5}>{LONG}</Fit></CmdLine>
              <CmdLine $bold><Fit w={353}>librarynavigator open_cell mylay mylay inv2 layout</Fit></CmdLine>
            </CmdText>
            <HScroll>
              <Raised $w={19.5}><Down $dir="left" $s={4.5} /></Raised>
              <Raised $w={845} />
              <Push />
              <Raised $w={19.5}><Down $dir="right" $s={4.5} /></Raised>
            </HScroll>
          </CmdMain>
          <VScroll $w={19.5}>
            <Raised $w={19.5} $h={19.5}><Down $dir="up" $s={4.5} /></Raised>
            <Gap $h={31} />
            <Raised $w={19.5} $h={29} />
            <Fill />
            <Raised $w={19.5} $h={19.5}><Down $s={4.5} /></Raised>
            <Corner />
          </VScroll>
        </CmdBody>
      </Cmd>
    </Docks>
  );
}

const Status = styled.footer`
  height: 26px;
  flex: none;
  display: flex;
  align-items: center;
  padding: 5px 4px 0 3px;
  background: ${FACE};
  border-top: 1.5px solid #f2f1ee;
`;

/* ----------------------------- host taskbar ----------------------------- */

const Taskbar = styled.footer`
  height: 58px;
  flex: none;
  display: flex;
  align-items: center;
  padding: 0 22px 0 13.5px;
  background: linear-gradient(90deg, #242424, #1e2022 20%, #1b2430 38%, #1b2430 80%, #202122);
  color: #fff;
  font: 14px "Noto Sans CJK KR", ${SYS};
  position: relative;
`;
const Shadow = styled.span`
  position: absolute;
  left: 769px;
  top: -3px;
  width: 383px;
  height: 3px;
  background: #1d1d1d;
`;
const Slot = styled.span<{ $dot?: boolean; $active?: boolean }>`
  width: 55.12px;
  height: 58px;
  padding-top: 2.5px;
  flex: none;
  display: flex;
  align-items: center;
  justify-content: center;
  position: relative;
  ${(p) =>
    p.$active &&
    css`
      background: linear-gradient(#313944, #2b323c) center / 48px 49px no-repeat;
    `}
  &::after {
    content: "";
    position: absolute;
    bottom: 4.5px;
    width: ${(p) => (p.$active ? 19 : p.$dot ? 7 : 0)}px;
    height: 3.5px;
    border-radius: 2px;
    background: ${(p) => (p.$active ? "#4cc2ff" : "#9a9a9a")};
  }
`;
const Clock = styled.div`
  display: flex;
  flex-direction: column;
  align-items: flex-end;
  line-height: 20px;
  margin-left: 20px;
`;

const chrome = (
  <>
    <circle cx="15" cy="15" r="14.8" fill="#fcc934" />
    <path d="M2.200 7.500A14.800 14.800 0 0 1 27.800 7.500L15 7.500 8.500 18.500z" fill="#ea4335" />
    <path d="M2.200 7.500A14.800 14.800 0 0 0 14.500 29.800L21 18.800 8.500 18.500z" fill="#34a853" />
    <circle cx="15" cy="15" r="7.2" fill="#fff" />
    <circle cx="15" cy="15" r="5.6" fill="#3a7cec" />
  </>
);
const APPS: { dot?: boolean; active?: boolean; art: React.ReactNode }[] = [
  { art: <g fill="#4cc2ff"><path d="M.5 .5h14v14H.5z" fill="#72e0fb" /><path d="M15.500 .5h14v14h-14z" /><path d="M.5 15.500h14v14H.5z" /><path d="M15.500 15.500h14v14h-14z" fill="#22a4f6" /></g> },
  { dot: true, art: <><path d="M0 4q0-2 2-2h7l3 4H0z" fill="#e8a416" /><path d="M0 6h28q2 0 2 2v18q0 2-2 2H0z" fill="#ffd35a" /><path d="M5 28v-5q0-2 2-2h16q2 0 2 2v5z" fill="#1781d8" /><path d="M9 25h12" stroke="#0b4f90" strokeWidth="1.5" /></> },
  { art: chrome },
  { dot: true, art: <><rect width="30" height="30" rx="4" fill="#fbe300" /><ellipse cx="15" cy="14" rx="11.5" ry="9.5" fill="#3c1e1e" /><path d="M9 21l-1 6 6-4z" fill="#3c1e1e" /><text x="15" y="17" fontSize="7.5" fontWeight="800" textAnchor="middle" fill="#fbe300" fontFamily="Open Sans">TALK</text></> },
  { art: <><rect x="7" y="1" width="23" height="28" rx="2" fill="#2b7cd3" /><path d="M7 1h21q2 0 2 2v5H7z" fill="#41a5ee" /><path d="M7 15h23v7H7z" fill="#185abd" /><path d="M7 22h23v5q0 2-2 2H7z" fill="#103f91" /><rect y="7" width="16" height="16" rx="1.5" fill="#185abd" /><text x="8" y="20" fontSize="13" fontWeight="700" textAnchor="middle" fill="#fff" fontFamily="Open Sans">W</text></> },
  { art: <><rect x="1" width="28" height="30" rx="5" fill="#3a9fd0" /><path d="M1 10L20 0h4q5 0 5 5v10L10 30H6q-5 0-5-5z" fill="#2583bc" /><path d="M8 1c-1 12 6 23 19 23" fill="none" stroke="#eef8ff" strokeWidth="2" /><text x="22" y="9" fontSize="7" fontWeight="700" fontStyle="italic" textAnchor="middle" fill="#fff" fontFamily="Open Sans">CAS</text></> },
  { art: <><path d="M2 3q0-2 2-2h22q2 0 2 2v12L16 28H4q-2 0-2-2z" fill="#ffd60a" /><path d="M16 15h12v2L18 28h-2z" fill="#4a4a42" /><path d="M28 16v10q0 2-2 2h-9z" fill="#f0aa12" /></> },
  { dot: true, art: <>{chrome}<circle cx="22" cy="7" r="7.5" fill="#0d5296" /><text x="22" y="10" fontSize="8" textAnchor="middle" fill="#fff" fontFamily="Noto Sans CJK KR">영</text></> },
  { dot: true, art: <><rect x="1" y="1" width="28" height="28" rx="5" fill="#f8f8f8" stroke="#c8c8c8" /><text x="15" y="23" fontSize="22" textAnchor="middle" fill="#333" stroke="#333" strokeWidth=".5" fontFamily="Liberation Serif">T</text></> },
  { dot: true, art: <g transform="translate(3 2) scale(1.2 1.3)"><rect width="20" height="20" fill="#cfe0f8" /><rect x="10" width="10" height="20" fill="#6f9fe0" /><path d="M0 2h7M0 5h8M0 8h9M0 11h9M0 14h7M0 17h6" stroke="#456" /><path d="M6 2h4l8 17h-4z" fill="#1c2636" /><path d="M18 2L7 19" stroke="#1c2636" strokeWidth="1.2" /></g> },
  { dot: true, active: true, art: <g transform="translate(1 1) scale(1.42)">{xlogo("#fff")}</g> },
  { dot: true, art: <><rect y="-1" width="22" height="23" rx="3" fill="#eceef2" /><path d="M4 4h14M4 4v14" fill="none" stroke="#d8382c" strokeWidth="3.5" strokeDasharray="3 1.6" /><path d="M17 7v12M7 18h13" stroke="#9aa4b0" strokeWidth="3" /><circle cx="16" cy="26" r="3" fill="none" stroke="#2ea8e8" strokeWidth="2" /><circle cx="27" cy="15" r="3" fill="none" stroke="#2ea8e8" strokeWidth="2" /><path d="M17 23l2-6 5-1" fill="none" stroke="#2ea8e8" strokeWidth="2" /></> },
];

function HostBar() {
  return (
    <Taskbar>
      <Shadow />
      {APPS.map((a, i) => (
        <Slot key={i} $dot={a.dot} $active={a.active}>
          <Svg width="30" height="30" viewBox="0 0 30 30">{a.art}</Svg>
        </Slot>
      ))}
      <Push />
      <svg width="240" height="30" viewBox="1558 1034 240 30">
        {P("M1561 1053l6-6 6 6", "#fff", 1.7)}
        <path d="M1597 1056c0-5 4-6 6-5 2-5 9-4 10 1 4 1 3 6 0 6h-12q-4 0-4-2z" fill="#b8bcc0" />
        {C(1611.5, 1054, 5.8, "#d8202c", "#d8202c", 0)}
        {P("M1609 1051.500l5 5M1614 1051.500l-5 5", "#fff", 1.3)}
        {P("M1644.500 1044q0-3 2.500-3t2.500 3v6q0 3-2.500 3t-2.500-3zM1640.500 1048v2q0 5.500 6.500 5.500t6.500-5.500v-2M1647 1055.500v4", "#7cd4ea", 1.5)}
        <text x="1687" y="1060" fontSize="27" textAnchor="middle" fill="#fff" fontFamily="Open Sans" fontWeight="300">A</text>
        {P("M1718 1048q9-9 18 0M1721 1051.500q6-6 12 0M1724 1055q3-3 6 0", "#fff", 1.6)}
        {C(1727, 1057, 1.6, "#fff", "#fff", 0)}
        {P("M1748 1047.500h3l5-4v13l-5-4h-3zM1760 1047l5.500 6M1765.500 1047l-5.500 6", "#fff", 1.3)}
        {P("M1783 1045h9q2 0 2 2v7q0 2-2 2h-11q-2 0-2-2v-3M1796 1048.500v4", "#fff", 1.5)}
        <path d="M1783 1047h9v7h-12z" fill="#fff" />
        {P("M1781 1040l-3 6h3l-1 4 4-6h-3z", "#fff", 0.5, "#fff")}
      </svg>
      <Clock>
        <Fit w={62}>오후 2:05</Fit>
        <Fit w={78}>2025-03-26</Fit>
      </Clock>
    </Taskbar>
  );
}

const Screen = styled.div`
  width: 1918px;
  height: 1078px;
  overflow: hidden;
  display: flex;
  flex-direction: column;
`;

export default function App() {
  return (
    <Screen>
      <Global />
      <Header />
      <Toolbars />
      <Main>
        <LeftPanel />
        <Right>
          <DocStrip>
            <DocTab>
              <DocShape width="108" height="25" viewBox="0 0 108 25">
                <path d="M0 24.500C10 22 14 6 24 1.500h82q1 0 1 1.500v22" fill="#fff" stroke="#8b8985" />
              </DocShape>
              <DocLabel>
                <svg width="15" height="19" viewBox="0 0 15 19">
                  {P("M1 1h9l4 4v13H1z", "#222", 1.5, "#d8302c")}
                  {P("M5 6v8h5", "#fff", 2)}
                </svg>
                <Fit w={32}>inv2*</Fit>
                <Space $w={0} />
                <svg width="12" height="12" viewBox="0 0 12 12">{P("M1.500 1l9 9.500M10.500 1l-9 9.500", "#222", 2)}</svg>
              </DocLabel>
            </DocTab>
          </DocStrip>
          <Canvas />
          <Bottom />
        </Right>
      </Main>
      <Status>
        <Fit w={39}>Ready</Fit>
        <Push />
        <Raised $w={26} $h={21}>
          <svg width="20" height="18" viewBox="0 0 20 18">
            {P("M1 3h15M3 8h14M1 13h16M2 3l4 5-3 5 4 3M16 3l-3 5 4 5-5 3", "#222", 1.5)}
            {P("M6 14l9-12 2 1-8 12z", "#222", 1, "#ffe640")}
          </svg>
        </Raised>
        <Space $w={18} />
        <Fit w={91}>Mode: Drawing</Fit>
      </Status>
      <HostBar />
    </Screen>
  );
}
